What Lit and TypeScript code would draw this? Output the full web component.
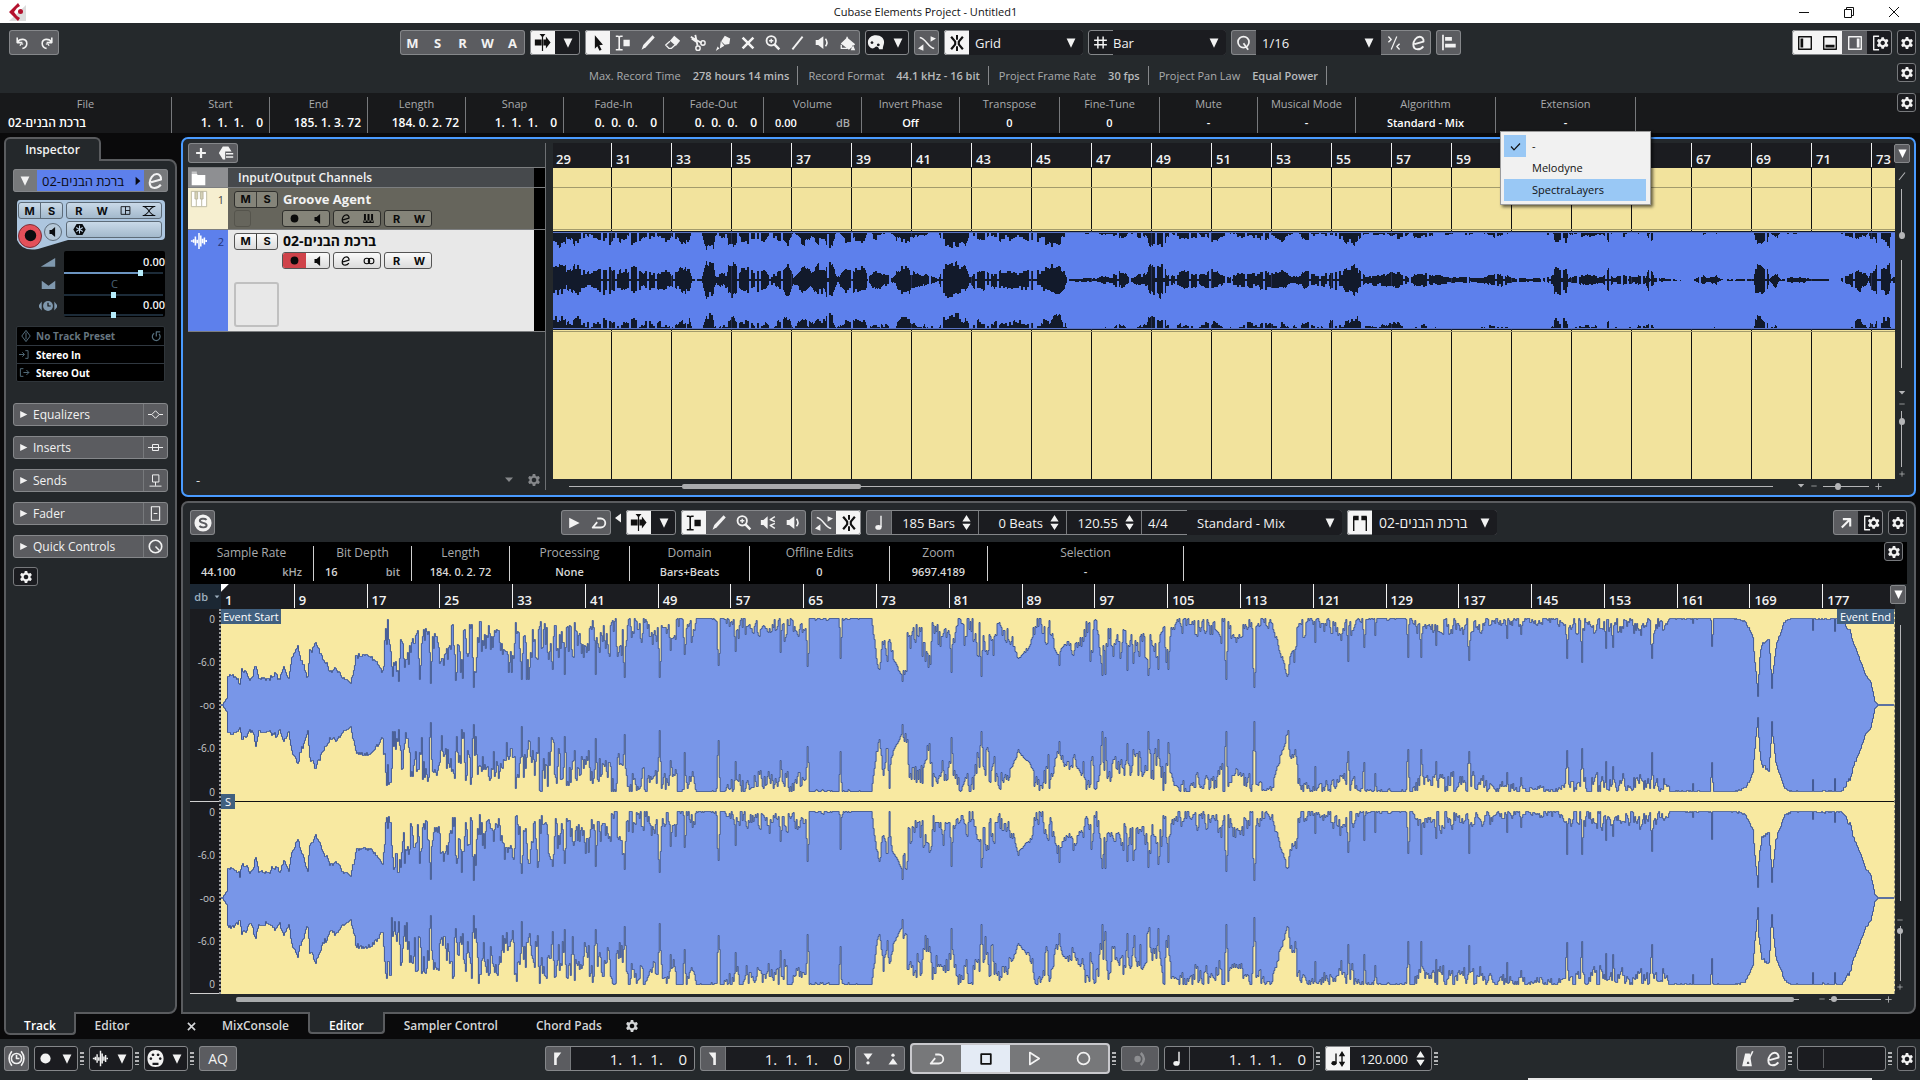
import { LitElement, html, svg, css, TemplateResult, SVGTemplateResult } from "lit";
import { customElement, property } from "lit/decorators.js";
import { classMap } from "lit/directives/class-map.js";

/* ---------- icon set, drawn on a 20 x 20 grid in currentColor ---------- */
const line = (d: string, w = 1.6) =>
  svg`<path d=${d} fill="none" stroke="currentColor" stroke-width=${w} stroke-linejoin="round" />`;
const fill = (d: string) => svg`<path d=${d} fill="currentColor" fill-rule="evenodd" />`;

const ICONS: Record<string, SVGTemplateResult> = {
  undo: svg`${line("M4 3v6.500h6.500M4.500 9C7 4 16 4 16 10.500c0 3-2.500 5.500-5.500 6.500", 2)}${line("M7.500 13.500q1-3.500 4-2", 1.5)}`,
  redo: svg`${line("M16 3v6.500H9.500M15.500 9C13 4 4 4 4 10.500c0 3 2.500 5.500 5.500 6.500", 2)}${line("M12.500 13.500q-1-3.500-4-2", 1.5)}`,
  down: fill("M4.500 4.500h11L10 16z"),
  downSmall: fill("M2 5h16l-8 9z"),
  right: fill("M4 3.500l13 6.500L4 16.500z"),
  tinyRight: fill("M6 3l8 7-8 7z"),
  left: fill("M16 1v18L4 10z"),
  updown: fill("M10 0l5.500 8.500h-11zM10 20l-5.500-8.500h11z"),
  scroll: svg`${fill("M1 6.500h8v7H1zM11 6.500h3V3l5.500 7-5.500 7v-3.500h-3zM6.500 0h7L10 4z")}${line("M10 2v18", 1.4)}`,
  arrow: fill("M6.500 1.500l9 10.500-4 .5 2.500 5-2.300 1.100-2.500-5-2.700 2.700z"),
  range: svg`${line("M2 2.500h2.200q1.600 0 1.600 1.300v12.400q0 1.300-1.600 1.300H2M9.600 2.500H7.400q-1.600 0-1.600 1.300M9.600 17.500H7.400q-1.600 0-1.600-1.300", 1.8)}${fill("M10.500 6.500h7v7h-7z")}`,
  pencil: fill("M16 1.500L18.500 4 8 15.500 3 18.500l2-5.500z"),
  eraser: svg`${fill("M12 2l7 6-5 6-7-6z")}${line("M7 8.500L2 13l4 4h2.500l4.500-4", 1.5)}`,
  scissors: svg`${line("M2 3l12 7M7 1l2.500 12M3 5l5 3.500", 2)}<circle cx="15.500" cy="10" r="2.400" fill="none" stroke="currentColor" stroke-width="1.600" /><circle cx="10" cy="15.800" r="2.400" fill="none" stroke="currentColor" stroke-width="1.600" />`,
  glue: fill("M12 2l6 3-1 6-5 1-4-4zM7.500 8l4 5-5 3zM4 14l2 2-4 3z"),
  mute: line("M4 4l12 12M16 4L4 16", 2.800),
  zoom: svg`<circle cx="8.500" cy="8" r="5.500" fill="none" stroke="currentColor" stroke-width="2.200" />${line("M12 12l6 6", 3)}${line("M6 8h5M8.500 5.500v5", 1.600)}`,
  slash: line("M4 18L16 3", 2.2),
  speaker: svg`${fill("M2 7h3l6-4.500v15L5 13H2z")}${line("M13.500 5.500q3.500 4.500 0 9", 1.8)}`,
  speakerOnly: fill("M5 7h3l5-4v14l-5-4H5z"),
  scrub: svg`${fill("M1 7h3l5-4.500v15L4 13H1z")}${line("M17.500 3l-5.500 3.500 5.500 2.500M17.500 17l-5.500-3.500 5.500-2.500", 1.7)}`,
  paint: svg`${fill("M2 10.500l7-6.500 9 7.500-7 6zM15.500 12l2.500 6h-5z")}${line("M2.500 12v4h7M9 3v7", 1.5)}`,
  palette: fill("M10 1.500c5.500 0 9 3.500 9 7.500 0 3-1.500 5-1.500 8h-4c-.5-1.500-1.500-3-3-3s-2 2-4 2C3.500 16 1 13 1 9.500c0-5 4-8 9-8zM5.500 8a1.600 1.600 0 1 0 .1 0M12.500 10.500a1.600 1.600 0 1 0 .1 0"),
  cross: svg`${line("M2 4c7 1 9 11 16 12", 1.700)}${fill("M0 16l6-4.500v7zM20 5l-6 3.500v-6z")}`,
  snap: svg`${line("M10 1v5.500M10 13.500V19", 2.200)}${line("M3.500 3l4.500 5.500v3L3.500 17M16.500 3L12 8.500v3l4.500 5.500", 2.400)}`,
  hash: line("M6.500 2v16M13.500 2v16M1.500 7h17M1.500 13h17", 2),
  quant: svg`<circle cx="10" cy="9.500" r="6.500" fill="none" stroke="currentColor" stroke-width="2" />${line("M10 11l5.500 7.500", 2)}`,
  iq: svg`${line("M13.500 2L6.500 18", 1.500)}${line("M3 2l3.500 3.500L3 9M17 11l-3.500 3.500L17 18", 1.700)}`,
  e: line("M5 11.300l10-2.800C15.500 5.500 13.300 3 10.800 3 7 3 3.700 7.500 3.700 11.800c0 3.200 1.900 5.200 4.800 5.200 2.600 0 4.800-1.300 6.300-3.300", 2.1),
  align: fill("M2.500 1h2v18h-2zM6 3.500h8v4.500H6zM6 11.500h12.500V16H6z"),
  zoneL: svg`${line("M3 3h14v14H3z", 1.6)}${fill("M5 5h3v10H5z")}`,
  zoneB: svg`${line("M3 3h14v14H3z", 1.6)}${fill("M5 12h10v3H5z")}`,
  zoneR: svg`${line("M3 3h14v14H3z", 1.6)}${fill("M12 5h3v10h-3z")}`,
  gear: fill("M8 0h4l.8 3.200 1.800 1 3.200-1 2 3.500-2.300 2.300v2l2.300 2.300-2 3.500-3.200-1-1.800 1L12 20H8l-.8-3.200-1.800-1-3.200 1-2-3.500L2.500 11V9L.2 6.700l2-3.500 3.200 1 1.800-1zM10 6.200a3.800 3.800 0 1 0 .01 0z"),
  setup: svg`${line("M9 2.500H3v15h6", 1.600)}<g transform="translate(6.500 3.500) scale(.65)">${fill("M8 0h4l.8 3.200 1.800 1 3.200-1 2 3.500-2.300 2.300v2l2.300 2.300-2 3.500-3.200-1-1.800 1L12 20H8l-.8-3.200-1.800-1-3.200 1-2-3.500L2.500 11V9L.2 6.700l2-3.500 3.200 1 1.800-1zM10 6.200a3.800 3.800 0 1 0 .01 0z")}</g>`,
  plus: line("M10 3v14M3 10h14", 3.2),
  preset: fill("M6 2h7l4 6H9v10H6L1 10zM10 10h9v2h-9zM10 14h9v2h-9z"),
  folder: fill("M2 4h6l1 2h9v12H2zM2 2h6v1H2z"),
  keys: svg`<path d="M1.500 1.500h17v17h-17z" fill="#fff" stroke="#b9b59c" /><path d="M7 10v8M13 10v8" stroke="#b9b59c" /><path d="M5.500 2h3v8h-3zM11.500 2h3v8h-3z" fill="#d5d1b6" stroke="#b9b59c" />`,
  keysDark: fill("M3 3h3v12H3zM8.500 3h3v12h-3zM14 3h3v12h-3zM2 13h16v4H2z"),
  wave: line("M1 10h2M4 8v4M6 5v10M8 8.500v4M10 1v18M12 4v12M14 7.500v5M16 6v8M18 9v2", 1.7),
  dot: svg`<circle cx="10" cy="10" r="6" fill="currentColor" />`,
  ring: svg`<circle cx="10" cy="10" r="7" fill="none" stroke="currentColor" stroke-width="2" />`,
  rings: svg`<circle cx="7" cy="10" r="4" fill="none" stroke="currentColor" stroke-width="1.500" /><circle cx="13" cy="10" r="4" fill="none" stroke="currentColor" stroke-width="1.500" />`,
  lanes: line("M2 3h16v14H2zM10 3v14M10 10h8", 1.6),
  bypass: line("M1 3.500h18M1 16.500h18M3 16C9 15 11 5 17 4M3 4c6 1 8 11 14 12", 1.5),
  freeze: svg`${fill("M5.500 1.500h9l5 8.500-5 8.500h-9L.5 10z")}<path d="M10 4v12M5 7l10 6M5 13l10-6" stroke="#bfd4e8" stroke-width="1.600" fill="none" />`,
  vol: fill("M1 16L19 5v11z"),
  pan: fill("M1 5l9 6.500L19 5v11H1z"),
  delay: svg`<circle cx="10" cy="10" r="5.500" fill="currentColor" />${fill("M-1 10l4-5v10zM21 10l-4-5v10z")}<path d="M10 6.500V10h3" stroke="#111" stroke-width="1.300" fill="none" />`,
  diamond: line("M10 2l6 8-6 8-6-8zM10 5v10", 1.4),
  reload: svg`${line("M7 5.500A6.500 6.500 0 1 0 15 6.500M10.500 11V3H17", 2)}`,
  input: line("M0 10h9M6 6l4 4-4 4M11.500 3h5v14h-5", 1.7),
  output: line("M8 3H2.500v14H8M8 10h10M13.500 5.500L18 10l-4.500 4.500", 1.7),
  eq: line("M0 10h5L10 5l5 5-5 5-5-5M15 10h5", 1.3),
  ins: line("M0 10h20M6 6h8v8H6z", 1.3),
  send: line("M6 2.500h8.500V12H6zM10 12v5M2 17.500h16", 1.3),
  fader: line("M4.500 1h11v18h-11zM7.500 10h5", 1.5),
  knob: svg`<circle cx="10" cy="10" r="8.300" fill="none" stroke="currentColor" stroke-width="2.200" />${line("M10 10l5 5", 2)}`,
  solo: svg`<circle cx="10" cy="10" r="9.500" fill="currentColor" /><path d="M14 6.500C12 4.500 6.500 4.800 6.500 7.500c0 3 7.500 1.800 7.500 5 0 3-6 3-8 .800" stroke="#5b5c60" stroke-width="2.200" fill="none" />`,
  loop: line("M8 5h4a5 5 0 0 1 0 10H3l5-6", 2),
  note: svg`${line("M12.500 1v14", 1.800)}<ellipse cx="9.300" cy="15.500" rx="3.900" ry="3" fill="currentColor" />`,
  sync: svg`${line("M7.500 3v12M15 3v14", 1.700)}<ellipse cx="5" cy="15.300" rx="3.300" ry="2.700" fill="currentColor" />${fill("M15 0l4 6.500h-8zM15 20l-4-6.500h8z")}`,
  grips: svg`${line("M3 19V3M17 19V3", 1.600)}${fill("M2.500 2h6v5h-6zM11.500 2h6v5h-6z")}`,
  popout: line("M5.500 4.500H16V15M15.500 5L4 16.500", 3),
  clock: svg`<circle cx="10" cy="10" r="6" fill="none" stroke="currentColor" stroke-width="1.800" />${line("M10 6v4h3.500M4.500 1.500q-6.500 8.500 0 17M15.500 1.500q6.500 8.500 0 17", 1.900)}`,
  midi: svg`${fill("M10 0c5.500 0 9.500 4 9.500 10s-3.500 10-9.500 10S.5 16 .5 10 4.500 0 10 0zM4.500 8.500a1.600 1.600 0 1 0 .1 0M7 4a1.600 1.600 0 1 0 .1 0M13 4a1.600 1.600 0 1 0 .1 0M15.500 8.500a1.600 1.600 0 1 0 .1 0M6.500 15h7v2.500h-7z")}`,
  locL: fill("M5.500 2H15L9 10v8.500H5.500z"),
  locR: fill("M14.500 2H5l6 8v8.500h3.500z"),
  punchIn: svg`${fill("M3.500 2h13L10 11z")}<circle cx="10" cy="15.500" r="2.400" fill="currentColor" />`,
  punchOut: svg`${fill("M3.500 18h13L10 9z")}<circle cx="10" cy="4.500" r="2.400" fill="currentColor" />`,
  stop: line("M4 4h12v12H4z", 2.2),
  play: line("M4.500 3l11 7-11 7z", 2),
  precount: svg`<circle cx="7" cy="10" r="4" fill="currentColor" />${line("M11 2.500q7.500 7.500 0 15", 3.200)}`,
  metro: svg`${fill("M6 4h5.500L14 19H2.500zM8.500 13h2l.5 3.500H8z")}${line("M9 14l6-12.500", 1.900)}`,
  close: line("M3.500 3.500l13 13M16.500 3.500l-13 13", 3),
  check: line("M4 10l4 4.500L16 6", 1.6),
  minus: line("M1 10h18", 2.5),
  plusThin: line("M1 10h18M10 1v18", 2.5),
};

const ico = (name: string, size = 18) =>
  html`<svg class="i" width=${size} height=${size} viewBox="0 0 20 20" aria-hidden="true">${ICONS[name]}</svg>`;

/* ---------- waveform data ---------- */
const hash = (n: number) => {
  const s = Math.sin(n * 127.1 + 311.7) * 43758.5453;
  return s - Math.floor(s);
};

/* position, level, jitter */
const LEVELS: number[][] = [
  [0, 0, 0], [5, 0.08, 0], [6, 0.38, 0.1], [18, 0.33, 0.08], [20, 0.48, 0.1], [28, 0.32, 0.06], [34, 0.5, 0.1],
  [37, 0.32, 0.06], [48, 0.34, 0.08], [51, 0.42, 0.08], [58, 0.34, 0.06], [62, 0.46, 0.08], [67, 0.32, 0.06],
  [70, 0.58, 0.08], [76, 0.72, 0.1], [86, 0.36, 0.06], [88, 0.66, 0.1], [94, 0.78, 0.14], [101, 0.6, 0.1],
  [108, 0.42, 0.06], [113, 0.46, 0.1], [120, 0.36, 0.06], [129, 0.26, 0.03], [134, 0.62, 0.12], [150, 0.6, 0.08],
  [161, 0.42, 0.08], [164, 1.05, 0.75], [200, 1.05, 0.7], [225, 0.85, 0.4], [229, 1.05, 0.65], [260, 1.05, 0.7],
  [285, 1.0, 0.6], [330, 1.06, 0.68], [362, 0.98, 0.55], [400, 1.08, 0.62], [412, 1.08, 0.35], [440, 1.1, 0.45],
  [470, 1.1, 0.4], [475, 1.05, 0.06], [505, 1.05, 0.1], [510, 1.06, 0.4], [582, 1.06, 0.3],
  [590, 1.03, 0.04], [608, 1.03, 0.06], [615, 1.05, 0.1], [650, 1.03, 0.03], [655, 0.58, 0.1], [658, 0.5, 0.1],
  [662, 1.02, 0.4], [666, 0.52, 0.1], [668, 1.02, 0.3], [672, 0.55, 0.06], [680, 0.38, 0.04], [684, 0.95, 0.6],
  [730, 1.02, 0.6], [736, 1.04, 0.3], [770, 1.06, 0.65], [790, 0.92, 0.25], [797, 0.55, 0.06], [808, 0.72, 0.08],
  [814, 1.02, 0.45], [828, 1.02, 0.45], [836, 0.7, 0.2], [858, 0.82, 0.25], [864, 1.04, 0.55], [882, 1.06, 0.45],
  [900, 1.0, 0.45], [912, 1.04, 0.65], [945, 1.05, 0.6], [950, 1.06, 0.25], [985, 1.06, 0.35], [1000, 1.06, 0.4],
  [1048, 1.06, 0.22], [1052, 0.98, 0.2], [1058, 0.7, 0.1], [1066, 0.4, 0.08], [1070, 0.9, 0.4], [1082, 1.05, 0.35],
  [1095, 1.04, 0.08], [1104, 1.05, 0.3], [1130, 1.05, 0.3], [1145, 1.03, 0.06], [1185, 1.03, 0.06], [1195, 1.05, 0.3],
  [1240, 1.05, 0.3], [1300, 1.04, 0.12], [1360, 1.05, 0.25], [1430, 1.07, 0.35], [1442, 1.06, 0.25], [1450, 1.02, 0.03],
  [1510, 1.02, 0.03], [1524, 0.99, 0.05], [1532, 0.82, 0.05], [1536, 0.3, 0.1], [1541, 0.75, 0.12], [1548, 0.78, 0.06],
  [1551, 0.3, 0.05], [1555, 0.72, 0.06], [1563, 0.97, 0.06], [1570, 1.02, 0.04], [1620, 1.02, 0.04], [1628, 0.92, 0.1],
  [1635, 0.66, 0.04], [1645, 0.36, 0.04], [1650, 0.27, 0.02], [1654, 0.05, 0], [1657, 0.012, 0], [1674, 0.012, 0],
];

/* narrow dips: position, level */
const DIPS: number[][] = [
  [177, 0.25], [187, 0.45], [209, 0.2], [226, 0.5], [252, 0.2], [254, 0.35], [300, 0.25], [308, 0.4], [331, 0.35],
  [343, 0.35], [374, 0.35], [403, 0.32], [438, 0.27], [449, 0.6], [463, 0.55], [497, 0.4], [514, 0.6], [559, 0.6],
  [586, 0.42], [619, 0.52], [681, 0.22], [730, 0.35], [760, 0.3], [838, 0.4], [881, 0.3], [884, 0.34], [906, 0.4],
  [927, 0.35], [937, 0.35], [947, 0.4], [1005, 0.27], [1033, 0.18], [1067, 0.3], [1094, 0.7], [1127, 0.5],
  [1143, 0.62], [1154, 0.75], [1187, 0.5], [1200, 0.5], [1215, 0.65], [1248, 0.5], [1286, 0.72], [1300, 0.8],
  [1346, 0.5], [1361, 0.48], [1385, 0.62], [1392, 0.65], [1431, 0.5], [1472, 0.88], [1491, 0.66], [1537, 0.1],
  [1551, 0.16], [1592, 0.85], [1614, 0.85],
];

function level(x: number, seed: number): number {
  let k = 1;
  while (k < LEVELS.length - 1 && LEVELS[k][0] < x) k++;
  const a = LEVELS[k - 1];
  const b = LEVELS[k];
  const t = Math.min(1, Math.max(0, (x - a[0]) / (b[0] - a[0])));
  const base = a[1] + (b[1] - a[1]) * t;
  const jit = a[2] + (b[2] - a[2]) * t;
  const slow = hash(Math.floor(x / 6) + 31);
  const pair = hash(Math.floor((x + (seed % 2)) / 3) * 7 + 12);
  const fast = hash(x * 3 + seed * 77);
  let v = base - jit * (0.2 * slow + 0.65 * Math.pow(pair, 1.5) + 0.4 * Math.pow(fast, 2));
  for (const [dx, dv] of DIPS) {
    const dist = Math.abs(x - dx);
    if (dist < 1) v = Math.min(v, dv + hash(seed + dx) * 0.06);
    else if (dist < 2) v = Math.min(v, dv + 0.15 + hash(seed + dx + x) * 0.3);
  }
  return Math.max(0.008, Math.min(1, v));
}

function channelPath(width: number, mid: number, amp: number, seed: number): string {
  let d = `M.5 ${mid}`;
  for (let x = 0; x < width; x++) d += `V${Math.round(mid - level(x, seed) * amp) + 0.5}H${x + 1.5}`;
  for (let x = width - 1; x >= 0; x--) d += `V${Math.round(mid + level(x, seed + 5) * amp) - 0.5}H${x + 0.5}`;
  return d + "Z";
}

/* dark gaps of the arranged clip: position, half height */
const GAPS: number[][] = [
  [0, 17], [12, 17], [13, 9], [20, 13], [38, 12], [40, 12], [58, 13], [62, 10], [75, 14], [95, 12], [115, 12],
  [118, 7], [136, 14], [139, 1], [148, 1], [153, 17], [160, 15], [163, 6], [180, 16], [186, 8], [190, 13], [212, 12],
  [216, 6], [236, 16], [240, 4], [252, 15], [258, 8], [264, 16], [280, 17], [284, 3], [292, 12], [312, 16], [315, 3],
  [320, 10], [338, 4], [348, 14], [360, 14], [364, 10], [385, 1], [390, 15], [412, 17], [416, 5], [425, 12], [440, 8],
  [460, 10], [476, 13], [495, 12], [505, 17], [511, 10], [514, 1], [540, 2], [560, 5], [570, 11], [577, 2], [590, 8],
  [597, 14], [611, 17], [613, 5], [632, 10], [645, 6], [660, 11], [672, 4], [700, 8], [730, 10], [738, 3], [752, 11],
  [770, 8], [790, 10], [806, 14], [812, 5], [840, 8], [855, 4], [880, 8], [895, 3], [926, 3], [948, 7], [962, 2],
  [990, 2], [1000, 7], [1001, 16], [1013, 15], [1015, 2], [1030, 6], [1050, 4], [1055, 10], [1060, 3], [1075, 5],
  [1092, 4], [1096, 15], [1101, 2], [1115, 1], [1140, 0], [1150, 6], [1156, 2], [1163, 6], [1168, 1], [1200, 1],
  [1202, 15], [1214, 10], [1216, 1], [1222, 9], [1228, 1], [1240, 3], [1285, 0], [1297, 6], [1305, 11], [1312, 10],
  [1315, 2], [1317, 14], [1336, 15], [1338, 1], [1342, 7],
];

function clipPath(): string {
  const gap = (x: number, seed: number) => {
    let k = 1;
    while (k < GAPS.length - 1 && GAPS[k][0] < x) k++;
    const a = GAPS[k - 1];
    const b = GAPS[k];
    const t = Math.min(1, Math.max(0, (x - a[0]) / (b[0] - a[0])));
    const h = a[1] + (b[1] - a[1]) * t;
    const r = hash(Math.floor(x / 2) + seed);
    const block = hash(Math.floor(x / 7) + 400);
    const edge = hash(Math.floor(x / 2) + 900);
    return edge > 0.89 ? Math.round(h * 0.1) : Math.round(h * (0.35 + 0.4 * r + 0.5 * block));
  };
  let d = "";
  for (let x = 0; x < 1342; x++) {
    const top = Math.max(0, gap(x, 3) - 1 - Math.floor(hash(x >> 2) * 5));
    const bottom = Math.max(0, gap(x, 19) - 2 - Math.floor(hash((x >> 2) + 50) * 5));
    d += `M${x} ${2 + top}h1V${49 - gap(x, 3)}h-1zM${x} ${49 + gap(x, 11)}h1V${97 - bottom}h-1z`;
  }
  return d;
}

/* ---------- shared styles ---------- */
const shared = css`
  :host, * { box-sizing: border-box; }
  button, input, select {
    font: inherit; color: inherit; background: none; border: 0; padding: 0; margin: 0; min-width: 0; border-radius: 0;
  }
  select { appearance: none; }
  .i { display: block; flex: none; }
  .g {
    display: flex; height: 25px; border-radius: 3px; overflow: hidden; background: #5b5c60; color: #f2f2f2;
    outline: 1px solid #85878a; outline-offset: -1px; flex: none;
  }
  .g button { width: 25px; display: grid; place-items: center; font-weight: 600; }
  .g.dark, .g .dark { background: #1b1c20; }
  .g .on { background: #f4f4f4; color: #111; }
  .sel { position: relative; display: flex; align-items: center; background: #1b1c20; font-size: 13px; }
  .sel select { width: 100%; height: 100%; padding-left: 7px; }
  .sel svg { position: absolute; right: 4px; pointer-events: none; }
  .gearbtn {
    width: 19px; height: 19px; display: grid; place-items: center; background: #1b1c20; color: #f2f2f2;
    border: 1px solid #77797c; border-radius: 3px; flex: none;
  }
  .gearbtn.tall { height: 25px; }
`;

const btn = (icon: string, label: string, cls: string = "", size = 18) =>
  html`<button class=${cls} aria-label=${label}>${ico(icon, size)}</button>`;

const drop = (label: string, value: string, cls: string) => html`
  <span class="sel ${cls}"><select aria-label=${label}><option>${value}</option></select>${ico("down", 16)}</span>`;

/* ---------- info line: label over value cells ---------- */
interface Cell { label: string; value: string; unit?: string; w: string; align?: string; }

@customElement("info-line")
class InfoLine extends LitElement {
  @property({ attribute: false }) cells: Cell[] = [];
  static styles = [shared, css`
    :host { display: flex; }
    .c { display: flex; flex-direction: column; border-right: 1px solid var(--line, #77797c); flex: none; }
    .l { text-align: center; color: #a9abad; line-height: 13px; height: 18px; font-size: var(--label, 11px); }
    .v { display: flex; justify-content: center; white-space: pre; font-weight: 600; line-height: 16px; font-size: 11px; color: var(--value, #fff); padding: 0 6px; }
    .v.end { justify-content: flex-end; font-size: 12px; }
    .v.start { justify-content: flex-start; font-size: 12px; padding-left: 8px; }
    .v.unit { justify-content: space-between; padding: 0 11px; }
    .u { color: #a9abad; }
    .w98 { width: 98px; } .w100 { width: 100px; } .w120 { width: 120px; }
    .w124 { width: 124px; } .w140 { width: 140px; } .w172 { width: 172px; } .w196 { width: 196px; }
  `];
  render() {
    return this.cells.map((c) => html`
      <div class="c w${c.w}">
        <span class="l">${c.label}</span>
        <span class=${classMap({ v: true, end: c.align === "end", start: c.align === "start", unit: !!c.unit })}
          ><span>${c.value}</span>${c.unit ? html`<span class="u">${c.unit}</span>` : ""}</span>
      </div>`);
  }
}

/* ---------- left zone ---------- */
@customElement("left-inspector")
class LeftInspector extends LitElement {
  static styles = [shared, css`
    :host { display: flex; flex-direction: column; width: 173px; flex: none; color: #f2f2f2; font-size: 12px; }
    .tab { width: 97px; height: 24px; border: 2px solid #5a5c5f; border-bottom: 0; border-radius: 6px 6px 0 0; background: #24282b;
      margin-bottom: -2px; z-index: 1; display: grid; place-items: center; font-weight: 600; flex: none; }
    .body { flex: 1; min-height: 0; border: 2px solid #5a5c5f; border-radius: 0 8px 8px 0; background: #24282b; padding: 8px 7px; }
    .head { display: flex; height: 23px; border-radius: 3px; overflow: hidden; background: #77797b; outline: 1px solid #85878a; outline-offset: -1px; font-size: 13px; }
    .head button { width: 24px; display: grid; place-items: center; }
    .name { flex: 1; background: #5d80ec; color: #0a0a12; display: flex; align-items: center; justify-content: space-between; padding-left: 5px; white-space: nowrap; }
    .chan { position: relative; height: 50px; margin: 8px 3px 0; color: #0b0d10; font: 700 11px "Inter", sans-serif; }
    .shape { position: absolute; inset: 0; }
    .cg { position: relative; display: grid; grid-template-columns: 45px 96px; column-gap: 3px; row-gap: 2px; padding: 2px 2px 0; }
    .box { height: 17px; border: 1px solid #5d6b78; border-radius: 3px; display: flex; background: linear-gradient(#c9d9e8, #a3b9cc); }
    .box button { flex: 1; display: grid; place-items: center; }
    .box button + button { border-left: 1px solid #5d6b78; }
    .box.n button + button { border: 0; }
    .box.fz button { flex: 0 0 24px; }
    .rec { display: flex; align-items: center; gap: 2px; height: 29px; }
    .r { width: 24px; height: 24px; border-radius: 50%; background: #e4505a; border: 1px solid #7b3038; display: grid; place-items: center; flex: none; }
    .m { width: 18px; height: 18px; border-radius: 50%; background: #b5c8d9; border: 1px solid #5d6b78; display: grid; place-items: center; flex: none; margin-bottom: 8px; }
    .lv { display: grid; grid-template-columns: 48px 101px; margin: 1px 3px 0; }
    .ic { display: grid; grid-template-rows: 22px 22px 22px; place-items: center; color: #7f98ae; padding-left: 16px; }
    .vals { height: 66px; background: #000; display: grid; grid-template-rows: 18px 8px 14px 8px 12px 6px; font-size: 11px; font-weight: 600; border-radius: 2px; }
    .vals span { text-align: right; line-height: 22px; }
    .vals span.c { text-align: center; color: #4a6076; line-height: 14px; font-weight: 400; }
    .vals span.d { line-height: 12px; }
    input[type="range"] { appearance: none; width: 99px; height: 8px; display: block; background: linear-gradient(#1c2b38, #1c2b38) center / 100% 2px no-repeat; }
    input.v { background: linear-gradient(90deg, #6c94c0 77%, #1c2b38 77%) center / 100% 2px no-repeat; }
    input[type="range"]::-webkit-slider-thumb { appearance: none; width: 5px; height: 6px; background: #b6ecfb; border: 0; }
    .io { margin: 9px 3px 0; background: #000; border: 1px solid #2f353a; font-size: 10px; font-weight: 700; border-radius: 2px; }
    .io div { height: 18px; display: flex; align-items: center; gap: 6px; padding: 0 2px; color: #fff; }
    .io div + div { border-top: 1px solid #303840; }
    .io svg { color: #56707f; }
    .io .p { color: #66757f; gap: 3px; } .io .p span { flex: 1; }
    .secs { display: flex; flex-direction: column; gap: 10px; margin-top: 21px; }
    .sec { height: 23px; display: flex; background: #5b5c60; border: 1px solid #85878a; border-radius: 3px; width: 100%; }
    .sec button { display: flex; align-items: center; gap: 4px; flex: 1; padding-left: 4px; }
    .sec .x { flex: 0 0 24px; border-left: 1px solid #77797c; justify-content: center; padding: 0; }
    .gearbtn { width: 25px; margin-top: 9px; }
    .foot { display: flex; height: 23px; margin-top: -2px; z-index: 1; font-weight: 600; flex: none; }
    .foot button { width: 72px; border: 2px solid transparent; border-top: 0; color: #d4d6d8; padding-top: 6px; }
    .foot .act { background: #24282b; border-color: #5a5c5f; border-radius: 0 0 4px 6px; color: #fff; }
    .body { border-bottom-left-radius: 0; }
  `];
  render() {
    return html`
      <div class="tab">Inspector</div>
      <div class="body">
        <div class="head">
          ${btn("down", "Collapse track section", "", 16)}
          <span class="name"><span>02-ברכת הבנים</span>${ico("tinyRight", 12)}</span>
          ${btn("e", "Edit channel settings", "", 20)}
        </div>
        <div class="chan">
          <svg class="shape" viewBox="0 0 149 50" aria-hidden="true"><path d="M4 0h141q4 0 4 4v32q0 4-4 4H52L22 49Q6 52 1 40V4q0-4 3-4z" fill="#adc6df" /></svg>
          <div class="cg">
            <div class="box"><button>M</button><button>S</button></div>
            <div class="box n"><button>R</button><button>W</button>${btn("lanes", "Lanes", "", 11)}${btn("bypass", "Bypass inserts", "", 14)}</div>
            <div class="rec"><button class="r" aria-label="Record enable">${ico("dot", 19)}</button><button class="m" aria-label="Monitor">${ico("speakerOnly", 14)}</button></div>
            <div class="box fz">${btn("freeze", "Freeze channel", "", 13)}</div>
          </div>
        </div>
        <div class="lv">
          <div class="ic">${ico("vol", 16)}${ico("pan", 15)}${ico("delay", 18)}</div>
          <div class="vals">
            <span>0.00</span><input class="v" type="range" aria-label="Volume" value="79" />
            <span class="c">C</span><input type="range" aria-label="Pan" value="50" />
            <span class="d">0.00</span><input type="range" aria-label="Delay" value="50" />
          </div>
        </div>
        <div class="io">
          <div class="p">${ico("diamond", 14)}<span>No Track Preset</span>${ico("reload", 12)}</div>
          <div>${ico("input", 11)}<span>Stereo In</span></div>
          <div>${ico("output", 11)}<span>Stereo Out</span></div>
        </div>
        <div class="secs">
          ${[["Equalizers", "eq"], ["Inserts", "ins"], ["Sends", "send"], ["Fader", "fader"], ["Quick Controls", "knob"]].map(
            ([t, i]) => html`<div class="sec"><button>${ico("right", 11)}${t}</button>${btn(i, t + " bypass", "x", 15)}</div>`)}
        </div>
        ${btn("gear", "Set up inspector", "gearbtn", 12)}
      </div>
      <div class="foot"><button class="act">Track</button><button>Editor</button></div>`;
  }
}

/* ---------- project zone ---------- */
@customElement("project-zone")
class ProjectZone extends LitElement {
  static styles = [shared, css`
    :host { display: grid; grid-template-columns: 363px 7px minmax(0, 1fr) 19px; border: 2px solid #4a9bff; border-radius: 7px;
      background: #24282b; padding-top: 4px; min-height: 0; color: #f2f2f2; font-size: 13px; }
    .tracks { border-right: 1px solid #6d7073; margin-bottom: 5px; padding-left: 5px; display: flex; flex-direction: column; }
    .add { width: 50px; height: 20px; margin-bottom: 4px; }
    .row { display: flex; border-top: 1px solid #7c7e80; height: 42px; background: #000; padding-right: 11px; }
    .row.f { height: 20px; } .row.two { height: 103px; border-bottom: 1px solid #7c7e80; }
    .hd { width: 40px; flex: none; display: flex; justify-content: space-between; font-size: 11px; color: #444; line-height: 22px; padding: 1px 4px 0 2px; }
    .f .hd { background: #8e8f92; } .one .hd { background: #f6efd0; } .two .hd { background: #5d80ec; color: #24367a; }
    .hd svg { color: #fff; margin-top: 1px; }
    .bd { flex: 1; padding: 2px 0 0 6px; }
    .f .bd { background: #46494c; font-weight: 600; padding: 0 0 0 10px; line-height: 19px; font-size: 12px; }
    .one .bd { background: #66655c; } .two .bd { background: #e8e8e8; color: #0a0a0a; }
    .r1 { display: flex; gap: 5px; align-items: center; height: 18px; font-weight: 700; font-size: 13px; }
    .two .r1 { font-size: 14px; }
    .r2 { display: flex; gap: 3px; margin: 2px 0 0 48px; }
    .sq { float: left; width: 17px; height: 17px; border: 1px solid #55544c; border-radius: 3px; margin-top: 2px; }
    .sq.big { float: none; width: 45px; height: 45px; border: 2px solid #c0c0c0; margin-top: 13px; }
    .mb { display: flex; height: 17px; border: 1px solid #2f2f2c; border-radius: 3px; background: #858479; font: 700 11px "Inter", sans-serif; color: #0a0a0a; overflow: hidden; flex: none; }
    .two .mb { background: linear-gradient(#fafafa, #dcdcdc); border-color: #555; }
    .mb button { width: 21px; display: grid; place-items: center; }
    .mb.wide button { width: 23px; }
    .mb.ms button + button { border-left: 1px solid #3c3c38; }
    .mb .rec { background: #cf434a; }
    .bot { margin-top: auto; display: flex; align-items: center; gap: 14px; height: 16px; padding: 0 5px 0 8px; margin-bottom: 2px; color: #85878a; }
    .bot span { flex: 1; color: #ddd; }
    .ruler { display: flex; height: 25px; overflow: hidden; background: #1b1c20; font-weight: 600; font-size: 13px; }
    .tick { flex: 0 0 60px; border-left: 1px solid #f2f2f2; height: 24px; padding-left: 4px; line-height: 33px; }
    .tick:first-child { flex-basis: 58px; border: 0; padding-left: 3px; }
    .main { grid-column: 3; display: flex; flex-direction: column; }
    .lanes { flex: 1; display: flex; flex-direction: column;
      background: repeating-linear-gradient(90deg, transparent 0 58px, #111 58px 59px, transparent 59px 60px), #f2e39d; }
    .ln { border-bottom: 1px solid #a39b6c; height: 42px; } .ln.f { height: 20px; }
    .ln.clip { height: 102px; padding: 1px 0; }
    .clip svg { display: block; width: 100%; height: 99px; background: #121a2b; }
    .hs { height: 16px; display: flex; align-items: center; color: #b4b5b7; padding: 0 13px 2px 16px; gap: 6px; }
    .bar { flex: 1; height: 5px; background: linear-gradient(#b4b5b7, #b4b5b7) center / 100% 1px no-repeat; margin-right: 18px; }
    .thumb { height: 5px; background: #a9abad; border-radius: 2px; margin-left: 113px; width: 179px; }
    input[type="range"] { appearance: none; height: 8px; width: 46px; background: linear-gradient(#b4b5b7, #b4b5b7) center / 100% 1px no-repeat; }
    input::-webkit-slider-thumb { appearance: none; width: 6px; height: 7px; border-radius: 50%; background: #b4b5b7; }
    .side { grid-column: 4; grid-row: 1; display: flex; flex-direction: column; align-items: center; color: #b4b5b7; padding: 0 6px 18px 0; gap: 4px; }
    .side .t { width: 16px; height: 19px; background: #5b5c60; border: 1px solid #85878a; border-radius: 2px; color: #fff; display: grid; place-items: center; margin: 1px 0 4px; }
    .side input { writing-mode: vertical-lr; width: 8px; height: 56px; background: linear-gradient(#b4b5b7, #b4b5b7) center / 1px 100% no-repeat; }
    .side input.h { height: 50px; margin-top: 4px; }
    .vbar { width: 1px; background: #b4b5b7; flex: 1; max-height: 110px; margin: 17px 0; }
  `];
  /* bars hidden beneath the open extension menu carry no number */
  covered = [61, 63, 65];
  render() {
    const ms = html`<div class="mb ms"><button>M</button><button>S</button></div>`;
    const bars = Array.from({ length: 23 }, (_, i) => 29 + i * 2);
    return html`
      <div class="tracks">
        <div class="g add">${btn("plus", "Add track", "", 14)}${btn("preset", "Use track preset", "", 16)}</div>
        <div class="row f"><div class="hd">${ico("folder", 17)}</div><div class="bd">Input/Output Channels</div></div>
        <div class="row one">
          <div class="hd">${ico("keys", 18)}<span>1</span></div>
          <div class="bd">
            <div class="r1">${ms}<span>Groove Agent</span></div>
            <span class="sq"></span>
            <div class="r2">
              <div class="mb wide">${btn("dot", "Record", "", 13)}${btn("speakerOnly", "Monitor", "", 14)}</div>
              <div class="mb wide">${btn("e", "Edit", "", 12)}${btn("keysDark", "Instrument", "", 13)}</div>
              <div class="mb wide"><button>R</button><button>W</button></div>
            </div>
          </div>
        </div>
        <div class="row two">
          <div class="hd">${ico("wave", 18)}<span>2</span></div>
          <div class="bd">
            <div class="r1">${ms}<span>02-ברכת הבנים</span></div>
            <div class="r2">
              <div class="mb wide">${btn("dot", "Record", "rec", 13)}${btn("speakerOnly", "Monitor", "", 14)}</div>
              <div class="mb wide">${btn("e", "Edit", "", 12)}${btn("rings", "Channel configuration", "", 14)}</div>
              <div class="mb wide"><button>R</button><button>W</button></div>
            </div>
            <div class="sq big"></div>
          </div>
        </div>
        <div class="bot"><span>-</span>${ico("downSmall", 10)}${ico("gear", 12)}</div>
      </div>
      <div class="main">
        <div class="ruler">${bars.map((n) => html`<span class="tick">${this.covered.includes(n) ? "" : n}</span>`)}</div>
        <div class="lanes">
          <div class="ln f"></div><div class="ln"></div>
          <div class="ln clip">
            <svg viewBox="0 0 1342 99" preserveAspectRatio="none" shape-rendering="crispEdges" aria-hidden="true">
              ${Array.from({ length: 22 }, (_, i) => svg`<rect x=${58 + i * 60} y="0" width="1" height="99" fill="#272f55" />`)}
              <path d=${clipPath()} fill="#5d80ec" />
              <rect x="0" y="1" width="1342" height="1" fill="#5a74c4" /><rect x="0" y="97" width="1342" height="1" fill="#5a74c4" />
            </svg>
          </div>
        </div>
        <div class="hs">
          <div class="bar"><div class="thumb"></div></div>
          ${ico("downSmall", 8)}${ico("minus", 6)}<input type="range" aria-label="Horizontal zoom" value="30" />${ico("plusThin", 7)}
        </div>
      </div>
      <div class="side">
        <button class="t" aria-label="Ruler menu">${ico("down", 15)}</button>
        ${ico("slash", 10)}
        <input class="h" type="range" aria-label="Waveform zoom" value="100" />
        <div class="vbar"></div>
        ${ico("downSmall", 8)}${ico("minus", 6)}<input type="range" aria-label="Vertical zoom" value="14" />${ico("plusThin", 6)}
      </div>`;
  }
}

/* ---------- sample editor ---------- */
@customElement("sample-editor")
class SampleEditor extends LitElement {
  static styles = [shared, css`
    :host { display: flex; flex-direction: column; border: 2px solid #5a5c5f; border-radius: 7px 7px 8px 0; background: #24282b;
      padding: 7px 7px 0; min-height: 0; color: #f2f2f2; font-size: 13px; }
    .bar { display: flex; justify-content: space-between; height: 25px; margin-bottom: 7px; flex: none; }
    .lft { width: 35px; display: flex; } .mid, .rgt { display: flex; gap: 5px; }
    .mk { color: #f2f2f2; width: 5px; padding-top: 3px; } .mk svg { margin-left: -3px; }
    .num { display: flex; align-items: center; background: #1b1c20; padding-right: 4px; border-left: 1px solid #77797c; }
    .num input { width: 100%; text-align: right; padding-right: 4px; }
    .w87 { width: 87px; } .w88 { width: 88px; } .w75 { width: 75px; } .w125 { width: 125px; font-size: 14px; }
    .w155 { width: 155px; } .w155 select { padding-left: 10px; }
    .w46 { width: 46px; padding-left: 6px; } .num.w46 input { text-align: left; }
    .g.main .num { flex: none; }
    .info { display: flex; justify-content: space-between; background: #000; height: 42px; padding: 4px 4px 3px 0; flex: none; }
    .info .gearbtn { margin-top: -4px; }
    info-line { --line: #d0d0d0; --value: #d8d8d8; --label: 12px; }
    .ed { flex: 1; min-height: 0; display: grid; grid-template-columns: 31px minmax(0, 1fr) 12px; grid-template-rows: 25px minmax(0, 1fr) 18px; }
    .db { background: #1b2733; color: #9db0bf; font-size: 11px; font-weight: 600; display: flex; align-items: center; justify-content: flex-end; gap: 6px; padding-right: 1px; }
    .ruler { display: grid; grid-template-columns: repeat(23, minmax(0, 1fr)); background: #1b1c20; font-weight: 600; font-size: 13px; }
    .tick { border-left: 1px solid #f2f2f2; height: 24px; padding-left: 4px; line-height: 33px; }
    .tick:first-child { border: 0; background: linear-gradient(135deg, #fff 5px, transparent 6px); }
    .t { width: 16px; height: 19px; background: #5b5c60; border: 1px solid #85878a; border-radius: 2px; color: #fff; display: grid; place-items: center; margin: 1px 0 0 -5px; }
    .scale { background: #1b1c20; border-right: 2px dotted #9a9ca0; display: flex; flex-direction: column; font-size: 10px; color: #c8cacc; }
    .ch { flex: 1; display: flex; flex-direction: column; justify-content: space-between; text-align: right; padding: 2px 4px 1px 0; border-bottom: 1px solid #d0d0d0; line-height: 16px; }
    .view { position: relative; display: flex; flex-direction: column; background: #f8e9a1; border-right: 1px dashed #8a8a7a; }
    .view svg { display: block; width: 100%; flex: 1; min-height: 0; }
    .view svg + svg { border-top: 1px solid #111; }
    .tag { position: absolute; background: #41607f; color: #fff; font-size: 11px; line-height: 15px; height: 15px; padding: 0 2px; }
    .es { left: 0; top: 0; } .ee { right: 0; top: 0; padding: 0 3px; } .sn { left: 0; top: 185px; padding: 0 4px; }
    .side { display: flex; flex-direction: column; align-items: center; color: #b4b5b7; padding: 16px 2px 4px 0; gap: 3px; }
    .vbar { flex: 1; width: 1px; background: #b4b5b7; margin-bottom: 13px; }
    input[type="range"] { appearance: none; height: 8px; width: 52px; background: linear-gradient(#b4b5b7, #b4b5b7) center / 100% 1px no-repeat; }
    input::-webkit-slider-thumb { appearance: none; width: 6px; height: 6px; border-radius: 50%; background: #b4b5b7; }
    .side input { writing-mode: vertical-lr; width: 8px; height: 55px; background: linear-gradient(#b4b5b7, #b4b5b7) center / 1px 100% no-repeat; }
    .hs { grid-column: 2 / 4; display: flex; align-items: center; padding: 0 15px 8px 15px; gap: 4px; color: #b4b5b7; }
    .hb { flex: 1; background: linear-gradient(#b4b5b7, #b4b5b7) center / 100% 1px no-repeat; margin-right: 16px; padding-right: 5px; }
    .hb div { height: 5px; background: #a9abad; border-radius: 2px; }
  `];
  cells: Cell[] = [
    { label: "Sample Rate", value: "44.100", unit: "kHz", w: "124" },
    { label: "Bit Depth", value: "16", unit: "bit", w: "98" },
    { label: "Length", value: "184. 0. 2. 72", w: "98" },
    { label: "Processing", value: "None", w: "120" },
    { label: "Domain", value: "Bars+Beats", w: "120" },
    { label: "Offline Edits", value: "0", w: "140" },
    { label: "Zoom", value: "9697.4189", w: "98" },
    { label: "Selection", value: "-", w: "196" },
  ];
  num(label: string, value: string, cls: string) {
    return html`<span class="num ${cls}"><input aria-label=${label} .value=${value} />${ico("updown", 15)}</span>`;
  }
  render() {
    return html`
      <div class="bar">
        <div class="lft"><div class="g">${btn("solo", "Solo editor", "", 18)}</div></div>
        <div class="mid">
          <div class="g">${btn("right", "Audition", "", 16)}${btn("loop", "Audition loop", "", 18)}</div>
          <div class="mk">${ico("left", 10)}</div>
          <div class="g">${btn("scroll", "Auto-scroll", "on", 17)}${btn("down", "Auto-scroll settings", "dark", 16)}</div>
          <div class="g">${btn("range", "Range selection", "on")}${btn("pencil", "Draw", "", 17)}${btn("zoom", "Zoom", "", 17)}${btn("scrub", "Scrub", "", 17)}${btn("speaker", "Play", "", 17)}</div>
          <div class="g">${btn("cross", "Snap to zero crossing")}${btn("snap", "Snap", "on")}</div>
          <div class="g main">
            ${btn("note", "Musical information", "", 16)}${this.num("Bars", "185 Bars", "w87")}${this.num("Beats", "0 Beats", "w88")}${this.num("Tempo", "120.55", "w75")}
            <span class="num w46"><input aria-label="Time signature" .value=${"4/4"} /></span>${drop("Algorithm", "Standard - Mix", "w155")}
          </div>
          <div class="g">${btn("grips", "Show clips", "on")}${drop("Edited clip", "02-ברכת הבנים", "w125")}</div>
        </div>
        <div class="rgt">
          <div class="g">${btn("popout", "Open in separate window", "", 14)}${btn("setup", "Set up toolbar", "dark")}</div>
          ${btn("gear", "Toolbar settings", "gearbtn tall", 12)}
        </div>
      </div>
      <div class="info"><info-line .cells=${this.cells}></info-line>${btn("gear", "Info line settings", "gearbtn", 12)}</div>
      <div class="ed">
        <div class="db">db${ico("downSmall", 6)}</div>
        <div class="ruler">${Array.from({ length: 23 }, (_, i) => html`<span class="tick">${1 + i * 8}</span>`)}</div>
        <button class="t" aria-label="Ruler menu">${ico("down", 15)}</button>
        <div class="scale">
          ${[0, 1].map(() => html`<div class="ch">${["0", "-6.0", "-oo", "-6.0", "0"].map((t) => html`<span>${t}</span>`)}</div>`)}
        </div>
        <div class="view">
          ${[1, 2].map((s) => html`
            <svg viewBox="0 0 1674 192" preserveAspectRatio="none" aria-hidden="true">
              <path d=${channelPath(1673, 96, 87, s)} fill="#7896e8" stroke="#3f5795" stroke-width="1" />
            </svg>`)}
          <span class="tag es">Event Start</span><span class="tag ee">Event End</span><span class="tag sn">S</span>
        </div>
        <div class="side"><div class="vbar"></div>${ico("minus", 6)}<input type="range" aria-label="Vertical zoom" value="4" />${ico("plusThin", 6)}</div>
        <span></span>
        <div class="hs"><div class="hb"><div></div></div>${ico("minus", 6)}<input type="range" aria-label="Horizontal zoom" value="4" />${ico("plusThin", 7)}</div>
      </div>`;
  }
}

/* ---------- transport bar ---------- */
@customElement("transport-bar")
class TransportBar extends LitElement {
  static styles = [shared, css`
    :host { display: flex; justify-content: space-between; height: 39px; flex: none; padding: 7px 4px 0; background: #25292c; color: #f2f2f2; font-size: 13px; }
    .a, .m, .z { display: flex; gap: 5px; }
    .a { width: 243px; }
    .d { display: flex; gap: 2px; height: 25px; }
    .d::after { content: ""; width: 4px; height: 13px; margin: 6px 0; background: repeating-linear-gradient(#b4b5b7 0 2px, transparent 2px 4px); }
    .g .k { width: 22px; }
    .g .l { width: 38px; font-size: 14px; font-weight: 400; }
    .pos { width: 125px; background: #1b1c20; border-left: 1px solid #77797c; text-align: right; padding-right: 8px; font-size: 15px; }
    .tp { display: flex; align-items: stretch; width: 200px; height: 31px; margin-top: -3px; border: 2px solid #c9c9cd; border-radius: 4px; background: #77787a; overflow: hidden; flex: none; }
    .tp button { flex: 1; display: grid; place-items: center; }
    .tp .on { background: #e4ebf5; color: #111; }
    .dim { color: #8d8e91; }
    .num { display: flex; align-items: center; width: 82px; background: #1b1c20; padding-right: 4px; }
    .num input { width: 100%; text-align: right; padding-right: 5px; }
    .perf { width: 89px; } .perf::before { content: ""; width: 1px; margin: 3px 0 3px 26px; background: #5a5c5f; }
  `];
  render() {
    const duo = (i: string, l: string) => html`<div class="d"><div class="g dark">${btn(i, l, "k", 17)}${btn("down", l + " menu", "k", 16)}</div></div>`;
    return html`
      <div class="a">
        <div class="g">${btn("clock", "Constrain delay compensation", "", 17)}</div>
        ${duo("dot", "Common record mode")}${duo("wave", "Audio record mode")}${duo("midi", "MIDI record mode")}
        <div class="g"><button class="l">AQ</button></div>
      </div>
      <div class="m">
        <div class="g">${btn("locL", "Go to left locator", "", 15)}<input class="pos" aria-label="Left locator" .value=${"1.  1.  1.    0"} /></div>
        <div class="g">${btn("locR", "Go to right locator", "", 15)}<input class="pos" aria-label="Right locator" .value=${"1.  1.  1.    0"} /></div>
        <div class="g">${btn("punchIn", "Punch in", "", 14)}${btn("punchOut", "Punch out", "", 14)}</div>
        <div class="d"><div class="tp">${btn("loop", "Cycle", "", 18)}${btn("stop", "Stop", "on", 16)}${btn("play", "Start", "", 17)}${btn("ring", "Record", "", 17)}</div></div>
        <div class="g">${btn("precount", "Pre-roll", "l dim", 16)}</div>
        <div class="d"><div class="g dark">${btn("note", "Time format", "", 16)}<input class="pos" aria-label="Primary time" .value=${"1.  1.  1.    0"} /></div></div>
        <div class="d"><div class="g">${btn("sync", "Tempo track", "on", 16)}<span class="num"><input aria-label="Tempo" .value=${"120.000"} />${ico("updown", 15)}</span></div></div>
      </div>
      <div class="z">
        <div class="d"><div class="g">${btn("metro", "Metronome", "", 17)}${btn("e", "Metronome setup")}</div></div>
        <div class="d"><div class="g dark perf"></div></div>
        ${btn("gear", "Transport settings", "gearbtn tall", 12)}
      </div>`;
  }
}

/* ---------- application shell ---------- */
@customElement("app-root")
class AppRoot extends LitElement {
  static styles = [shared, css`
    :host { display: flex; flex-direction: column; height: 100vh; background: #0a0a0b; color: #f2f2f2;
      font-family: "Open Sans", "Noto Sans", "Liberation Sans", sans-serif; font-size: 13px; line-height: 16px; }
    .title { height: 23px; flex: none; background: #fff; color: #111; display: grid; grid-template-columns: 1fr auto 1fr; align-items: center; font-size: 11px; padding: 0 19px 0 8px; }
    .title span { padding-right: 58px; }
    .title div { display: flex; justify-content: flex-end; gap: 31px; }
    .bar { display: flex; justify-content: space-between; background: #25292c; padding: 7px 4px 0 9px; height: 40px; flex: none; }
    .lft { width: 60px; display: flex; align-items: flex-start; } .mid, .rgt { display: flex; gap: 5px; }
    .txt button { font-size: 13px; font-weight: 700; }
    .pair button { width: 22px; }
    .w114 { width: 114px; } .w125 { width: 125px; }
    .w114 select, .w125 select { padding-left: 6px; } .barsel select { padding-left: 0; }
    .barsel .sel { width: 113px; }
    .stat { display: flex; background: #25292c; height: 30px; flex: none; padding: 0 4px 0 9px; font-size: 11px; color: #a9abad; }
    .stat dl { flex: 1; display: flex; justify-content: center; margin: 3px 0 0; line-height: 20px; }
    .stat dl div { display: flex; gap: 12px; padding: 0 8px 0 10px; border-right: 1px solid #85878a; height: 19px; }
    .stat dd { margin: 0; font-weight: 600; color: #b8babc; }
    .infobar { display: flex; justify-content: space-between; background: #18191b; height: 40px; flex: none; padding: 0 4px 0 0; }
    .infobar info-line { margin: 4px 0 0; }
    .anchor { position: relative; display: flex; }
    .menu { position: absolute; right: -15px; top: 38px; width: 151px; background: #f1f1f1; border: 1px solid #9b9b9b; box-shadow: 2px 2px 3px #0009; z-index: 5;
      color: #111; padding: 3px; margin: 0; list-style: none; font-size: 11px; }
    .menu button { display: flex; align-items: center; width: 142px; height: 22px; text-align: left; }
    .menu .ck { width: 22px; height: 22px; display: grid; place-items: center; margin-right: 6px; }
    .menu .on .ck, .menu .hov { background: #99c8f5; }
    .work { flex: 1; display: flex; gap: 4px; padding: 4px 4px 4px; min-height: 0; }
    .zones { flex: 1; min-width: 0; display: grid; grid-template-rows: minmax(0, 360fr) minmax(0, 513fr) 17px; row-gap: 4px; }
    .tabs { display: flex; align-items: flex-start; margin-top: -6px; height: 23px; font-weight: 600; font-size: 12px; color: #d4d6d8; z-index: 1; }
    .tabs button { height: 22px; padding: 6px 19px 0; display: grid; place-items: center; }
    .tabs .x { padding: 6px 6px 0 5px; }
    .tabs .act { background: #24282b; border: 2px solid #5a5c5f; border-top: 0; border-radius: 0 0 4px 4px; color: #fff; }
    .edge { height: 2px; flex: none; background: #25292c; display: flex; justify-content: flex-end; padding-right: 48px; }
    .edge::after { content: ""; width: 344px; background: #e8e8e8; }
  `];
  cells: Cell[] = [
    { label: "File", value: "02-ברכת הבנים", w: "172", align: "start" },
    { label: "Start", value: "1.  1.  1.    0", w: "98", align: "end" },
    { label: "End", value: "185. 1. 3. 72", w: "98", align: "end" },
    { label: "Length", value: "184. 0. 2. 72", w: "98", align: "end" },
    { label: "Snap", value: "1.  1.  1.    0", w: "98", align: "end" },
    { label: "Fade-In", value: "0.  0.  0.    0", w: "100", align: "end" },
    { label: "Fade-Out", value: "0.  0.  0.    0", w: "100", align: "end" },
    { label: "Volume", value: "0.00", unit: "dB", w: "98" },
    { label: "Invert Phase", value: "Off", w: "98" },
    { label: "Transpose", value: "0", w: "100" },
    { label: "Fine-Tune", value: "0", w: "100" },
    { label: "Mute", value: "-", w: "98" },
    { label: "Musical Mode", value: "-", w: "98" },
    { label: "Algorithm", value: "Standard - Mix", w: "140" },
    { label: "Extension", value: "-", w: "140" },
  ];
  render(): TemplateResult {
    return html`
      <header class="title">
        <svg width="18" height="18" viewBox="0 0 18 18" aria-label="Cubase"><path d="M1 18L18 2v16z" fill="#ddd" /><path d="M10 0L1 9l9 9 2-3-3-2-3-4 3-4 3-2z" fill="#b3122d" /><circle cx="12.500" cy="8.500" r="2.500" fill="#b3122d" /></svg>
        <span>Cubase Elements Project - Untitled1</span>
        <div>
          <svg width="14" height="14" viewBox="0 0 14 14"><path d="M2 7.500h10" stroke="#111" /></svg>
          <svg width="14" height="14" viewBox="0 0 14 14"><path d="M2.500 4.500h7v8h-7zM4.500 4.500v-2h7v8h-2" stroke="#111" fill="none" /></svg>
          <svg width="14" height="14" viewBox="0 0 14 14"><path d="M2 2l10 10M12 2L2 12" stroke="#111" /></svg>
        </div>
      </header>
      <div class="bar">
        <div class="lft"><div class="g">${btn("undo", "Undo", "", 16)}${btn("redo", "Redo", "", 16)}</div></div>
        <div class="mid">
          <div class="g txt">${["M", "S", "R", "W", "A"].map((t) => html`<button>${t}</button>`)}</div>
          <div class="g">${btn("scroll", "Auto-scroll", "on", 17)}${btn("down", "Auto-scroll settings", "dark", 16)}</div>
          <div class="g">
            ${btn("arrow", "Object selection", "on")}${btn("range", "Range selection")}${btn("pencil", "Draw", "", 17)}${btn("eraser", "Erase", "", 17)}${btn("scissors", "Split")}${btn("glue", "Glue")}${btn("mute", "Mute")}${btn("zoom", "Zoom", "", 17)}${btn("slash", "Line", "", 17)}${btn("speaker", "Play", "", 17)}${btn("paint", "Color")}
          </div>
          <div class="g dark pair">${btn("palette", "Color selection")}${btn("down", "Color menu", "", 16)}</div>
          <div class="g">${btn("cross", "Snap to zero crossing")}</div>
          <div class="g">${btn("snap", "Snap", "on")}${drop("Snap type", "Grid", "w114")}</div>
          <div class="g barsel dark">${btn("hash", "Grid type", "", 15)}${drop("Grid resolution", "Bar", "")}</div>
          <div class="g">${btn("quant", "Quantize", "", 17)}${drop("Quantize preset", "1/16", "w125")}${btn("iq", "Iterative quantize", "", 16)}${btn("e", "Open quantize panel")}</div>
          <div class="g">${btn("align", "Align", "", 17)}</div>
        </div>
        <div class="rgt">
          <div class="g">${btn("zoneL", "Left zone", "on")}${btn("zoneB", "Lower zone", "on")}${btn("zoneR", "Right zone")}${btn("setup", "Set up window layout", "dark")}</div>
          ${btn("gear", "Toolbar settings", "gearbtn tall", 12)}
        </div>
      </div>
      <div class="stat">
        <dl>
          <div><dt>Max. Record Time</dt><dd>278 hours 14 mins</dd></div>
          <div><dt>Record Format</dt><dd>44.1 kHz - 16 bit</dd></div>
          <div><dt>Project Frame Rate</dt><dd>30 fps</dd></div>
          <div><dt>Project Pan Law</dt><dd>Equal Power</dd></div>
        </dl>
        ${btn("gear", "Status line settings", "gearbtn", 12)}
      </div>
      <div class="infobar">
        <div class="anchor">
          <info-line .cells=${this.cells}></info-line>
          <ul class="menu">
            <li><button class="on"><span class="ck">${ico("check", 15)}</span>-</button></li>
            <li><button><span class="ck"></span>Melodyne</button></li>
            <li><button class="hov"><span class="ck"></span>SpectraLayers</button></li>
          </ul>
        </div>
        ${btn("gear", "Info line settings", "gearbtn", 12)}
      </div>
      <main class="work">
        <left-inspector></left-inspector>
        <div class="zones">
          <project-zone></project-zone>
          <sample-editor></sample-editor>
          <nav class="tabs">
            ${btn("close", "Close lower zone", "x", 11)}<button>MixConsole</button><button class="act">Editor</button><button>Sampler Control</button><button>Chord Pads</button>${btn("gear", "Set up tabs", "x", 12)}
          </nav>
        </div>
      </main>
      <transport-bar></transport-bar>
      <div class="edge"></div>`;
  }
}
